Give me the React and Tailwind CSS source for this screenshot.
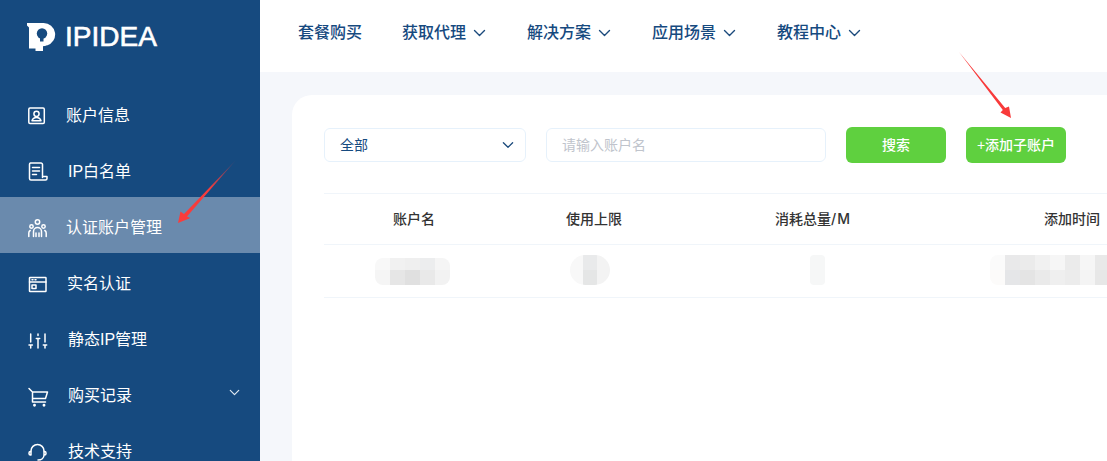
const FONT = "font-['Liberation_Sans','Noto_Sans_CJK_SC',sans-serif]";

const Ico = ({ children }) => (
  <svg width="20" height="20" viewBox="0 0 20 20" fill="none" stroke="white" strokeWidth="1.5" strokeLinecap="round" strokeLinejoin="round" className="shrink-0 overflow-visible">
    {children}
  </svg>
);

const icons = {
  account: (
    <Ico>
      <rect x="1.800" y="2" width="15.500" height="15.500" rx="1.200" />
      <circle cx="9.500" cy="7.800" r="2.600" />
      <path d="M5 14.800c.6-2.200 2.400-3.300 4.500-3.300s3.900 1.100 4.500 3.300z" />
    </Ico>
  ),
  doc: (
    <Ico>
      <path d="M15.500 15.500V2.500A1.500 1.500 0 0 0 14 1H3.500A1.500 1.500 0 0 0 2.500 2.500V16.500A1.500 1.500 0 0 0 4 18H18.500A1.500 1.500 0 0 0 20 16.500V14.500h-4.500" />
      <path d="M5.500 5.500h7M5.500 9h7M5.500 12.500h4" />
    </Ico>
  ),
  people: (
    <Ico>
      <circle cx="10.500" cy="4" r="2.200" />
      <circle cx="4.500" cy="8.500" r="1.700" />
      <circle cx="16.500" cy="8.500" r="1.700" />
      <path d="M6.500 18.500v-5a4 4 0 0 1 8 0v5M1.800 18.500v-3.500A3 3 0 0 1 3.200 12.500M19.200 18.500v-3.500a3 3 0 0 0-1.400-2.500M9 18.500v-3.500M12 18.500v-3.500" />
    </Ico>
  ),
  window: (
    <Ico>
      <rect x="2.500" y="3.500" width="16.500" height="14" rx="0.600" />
      <path d="M2.500 8h16.500M5 5.800h1M8 5.800h1M5 11h4v3.500H5z" />
    </Ico>
  ),
  sliders: (
    <Ico>
      <path d="M3.700 4v8M2 15h3.400M3.700 15v3M11 4v1.500M9.300 8.500h3.400M11 8.500v9.500M18 4v8M16.300 15h3.400M18 15v3" />
    </Ico>
  ),
  cart: (
    <Ico>
      <path d="M2 2.500 5.500 6v10H18.500M5.500 6H20.500L18.500 12.500H5.500" />
      <circle cx="7.500" cy="19.200" r="0.700" fill="white" />
      <circle cx="17" cy="19.200" r="0.700" fill="white" />
    </Ico>
  ),
  headset: (
    <Ico>
      <path d="M4 9a6.500 6.500 0 0 1 13 0" />
      <path d="M4 9.500H3.500A1.500 1.500 0 0 0 2 11v.5A1.500 1.500 0 0 0 3.500 13H4zM17 9.500h.5A1.500 1.500 0 0 1 19 11v.5a1.500 1.500 0 0 1-1.500 1.500H17zM17 13c0 3-2.500 5-6 5" />
    </Ico>
  ),
};

const menu = [
  { label: "账户信息", icon: "account", gap: "ml-[19px]" },
  { label: "IP白名单", icon: "doc", gap: "ml-[21px]" },
  { label: "认证账户管理", icon: "people", gap: "ml-[19px]", active: true },
  { label: "实名认证", icon: "window", gap: "ml-[20px]" },
  { label: "静态IP管理", icon: "sliders", gap: "ml-[21px]" },
  { label: "购买记录", icon: "cart", gap: "ml-[21px]", caret: true },
  { label: "技术支持", icon: "headset", gap: "ml-[21px]" },
];

const Chevron = ({ w = 13, h = 8, cls = "stroke-[#1b4a7c]" }) => (
  <svg width={w} height={h} viewBox="0 0 13 8" fill="none" className={cls} strokeWidth="1.400" strokeLinecap="round" strokeLinejoin="round">
    <path d="M1.500 1.500 6.500 6.500 11.500 1.500" />
  </svg>
);

const Mosaic = ({ rows, cell = "w-[15px]", shape = "rounded-lg", topRow = "h-[15px]" }) => (
  <div className={`flex flex-col overflow-hidden ${shape}`}>
    {rows.map((r, i) => (
      <div key={i} className={`flex ${i === 0 ? topRow : "h-[15px]"}`}>
        {r.map((c, j) => (
          <div key={j} className={`${cell} h-full`} style={{ backgroundColor: c }} />
        ))}
      </div>
    ))}
  </div>
);

const cols = "grid grid-cols-[180px_180px_258px_260px] w-[878px]";

export default function App() {
  return (
    <div className={`relative flex h-[461px] w-[1107px] overflow-hidden bg-[#f5f7fb] ${FONT}`}>
      <aside className="w-[260px] shrink-0 bg-[#164a7f] text-white">
        <div className="flex h-[85px] items-start pl-[26px] pt-[21px]">
          <svg width="30" height="31" viewBox="0 0 30 31" className="shrink-0">
            <path d="M1 2H17.500A11.500 11.500 0 0 1 21 24.500L17 25.500V30H9.500V27.500H3V6.500L1 4.500Z" fill="white" />
            <circle cx="16" cy="12.500" r="5.200" fill="#164a7f" />
            <rect x="14" y="15" width="3.500" height="5.500" fill="#164a7f" />
            <path d="M17 25.500 21.500 24.500 19 28 17 28Z" fill="#164a7f" />
          </svg>
          <span className="ml-[9px] mt-[1px] text-[28px] leading-[30px] font-['Liberation_Sans',sans-serif] text-white [-webkit-text-stroke:0.6px_white]">IPIDEA</span>
        </div>
        <nav className="flex flex-col">
          {menu.map((m) => (
            <div
              key={m.label}
              className={`flex h-[56px] items-center pl-[27px] pr-[20px] pt-[6px] text-base ${m.active ? "bg-[#6a8aad]" : ""}`}
            >
              {icons[m.icon]}
              <span className={`${m.gap} whitespace-nowrap`}>{m.label}</span>
              {m.caret && (
                <span className="ml-auto mb-2">
                  <Chevron w={11} h={7} cls="stroke-[#dfe8f2]" />
                </span>
              )}
            </div>
          ))}
        </nav>
      </aside>

      <div className="flex min-w-0 flex-1 flex-col">
        <header className="flex h-[72px] shrink-0 items-start gap-10 bg-white pl-[38px] pt-[21px] text-base font-medium leading-6 text-[#164a7f]">
          <span>套餐购买</span>
          {["获取代理", "解决方案", "应用场景", "教程中心"].map((t) => (
            <span key={t} className="flex w-[85px] items-center gap-[7px]">
              {t}
              <Chevron />
            </span>
          ))}
        </header>

        <main className="flex-1 pl-8 pt-[23px]">
          <section className="h-full overflow-hidden rounded-tl-[20px] bg-white pl-8 pt-8">
            <div className="flex items-center">
              <div className="flex h-[34px] w-[202px] items-center justify-between rounded-md border border-[#e6f1fb] pl-[15px] pr-[11px] text-sm text-[#164a7f]">
                全部
                <Chevron w={12} h={8} />
              </div>
              <div className="ml-5 flex h-[34px] w-[280px] items-center rounded-md border border-[#e6f1fb] pl-[15px] text-sm text-[#c0c4cc]">
                请输入账户名
              </div>
              <button className="ml-5 h-9 w-[100px] rounded-md bg-[#5fd03f] text-sm font-medium text-white">搜索</button>
              <button className="ml-5 h-9 w-[100px] rounded-md bg-[#5fd03f] text-sm font-medium text-white">+添加子账户</button>
            </div>

            <div className="mt-[30px] w-[878px]">
              <div className={`${cols} h-[52px] items-center border-y border-[#f0f5fa] text-center text-sm font-medium text-[#333]`}>
                <span>账户名</span>
                <span>使用上限</span>
                <span>
                  消耗总量<span className="font-['Inter',sans-serif] tracking-[1px]">/M</span>
                </span>
                <span>添加时间</span>
              </div>
              <div className={`${cols} h-[53px] items-center border-b border-[#f0f5fa]`}>
                <div className="flex justify-center pr-[4px] pt-[1px]">
                  <Mosaic
                    topRow="h-[12px]"
                    rows={[
                      ["#f8f8f8", "#f1f1f1", "#efefef", "#ecedee", "#f5f5f5"],
                      ["#f5f5f5", "#e6e6e6", "#e0e0e0", "#e9e9e9", "#f2f2f2"],
                    ]}
                  />
                </div>
                <div className="flex justify-center pb-[3px] pr-[8px]">
                  <Mosaic
                    shape="rounded-full"
                    rows={[
                      ["#f8f8f8", "#e9eaeb", "#f3f3f3"],
                      ["#f8f8f8", "#e5e6e6", "#f3f3f3"],
                    ]}
                    cell="w-[13.400px]"
                  />
                </div>
                <div className="flex justify-center pb-[3px] pl-[9px]">
                  <Mosaic shape="rounded" rows={[["#f6f7f7"], ["#f6f7f7"]]} />
                </div>
                <div className="flex justify-center pb-[3px]">
                  <Mosaic
                    rows={[
                      ["#fbfbfb", "#e9e9ea", "#ebebeb", "#f1f1f1", "#f6f6f6", "#ebebeb", "#f6f6f6", "#e9e9e9", "#f5f5f5", "#fafafa", "#fcfcfc"],
                      ["#fcfbfa", "#e5e6e8", "#e4e4e4", "#eaeaea", "#efefef", "#ececec", "#f4f4f4", "#e7e7e7", "#f0f0f0", "#f8f8f8", "#fcfcfc"],
                    ]}
                  />
                </div>
              </div>
            </div>
          </section>
        </main>
      </div>

      <svg width="1107" height="461" viewBox="0 0 1107 461" className="pointer-events-none absolute left-0 top-0">
        <defs>
          <linearGradient id="tail" x1="236" y1="160" x2="178" y2="223" gradientUnits="userSpaceOnUse">
            <stop offset="0" stopColor="#f53c3c" stopOpacity="0.150" />
            <stop offset="0.450" stopColor="#f53c3c" />
            <stop offset="1" stopColor="#fa3c3c" />
          </linearGradient>
        </defs>
        <path d="M178 223 180.500 211.500 184 214 236 160 187 216.500 190.500 218Z" fill="url(#tail)" />
        <path d="M959 52 1005.200 108.100 1009 106.500 1011 118 1000.500 112.500 1002.800 109.900Z" fill="#f83a3a" />
      </svg>
    </div>
  );
}
